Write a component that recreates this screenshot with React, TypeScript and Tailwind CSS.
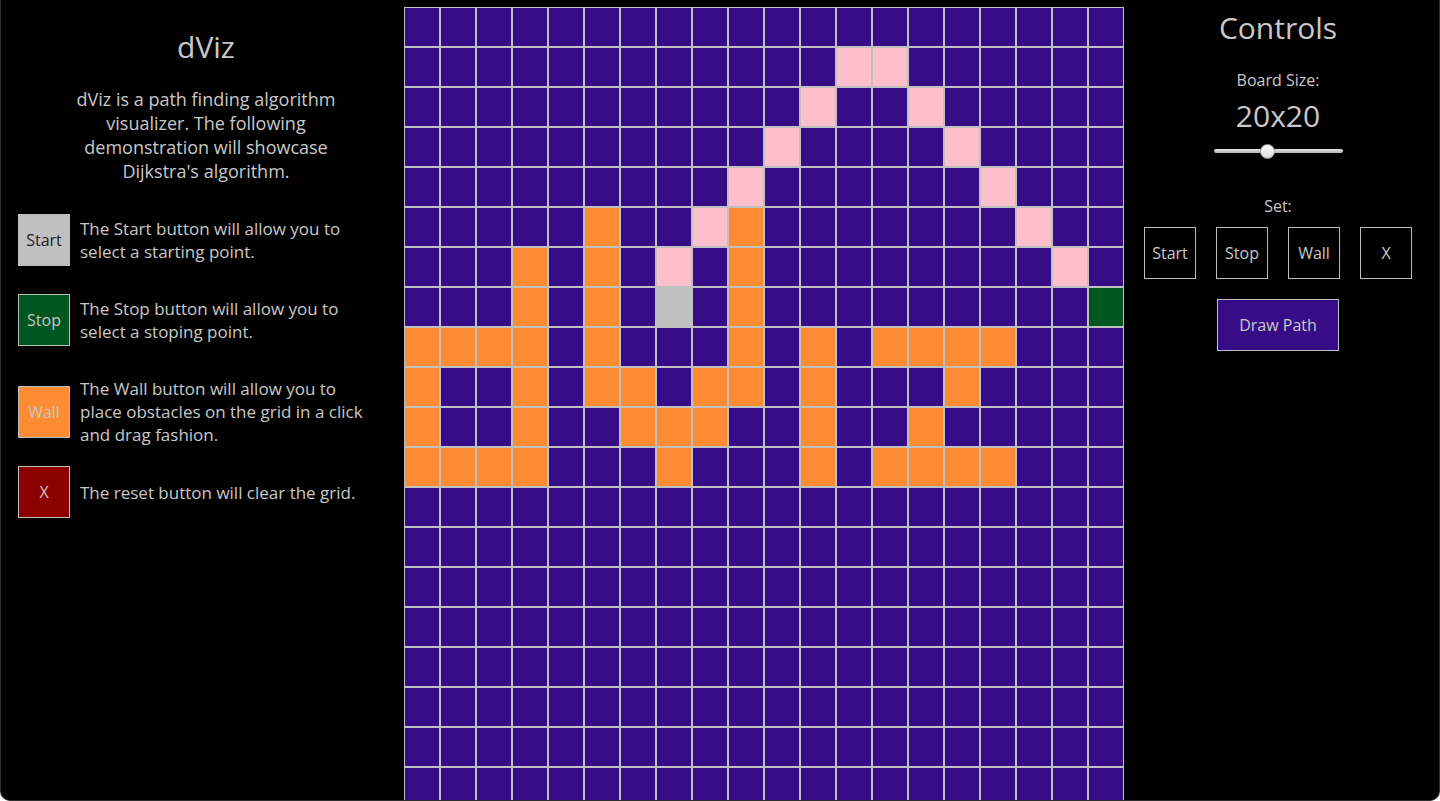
import React from "react";

const COLS = 20;
const ROWS = 20;

// cells drawn on the board, "row,col"
const walls = new Set([
  "5,5", "5,9",
  "6,3", "6,5", "6,9",
  "7,3", "7,5", "7,9",
  "8,0", "8,1", "8,2", "8,3", "8,5", "8,9", "8,11", "8,13", "8,14", "8,15", "8,16",
  "9,0", "9,3", "9,5", "9,6", "9,8", "9,9", "9,11", "9,15",
  "10,0", "10,3", "10,6", "10,7", "10,8", "10,11", "10,14",
  "11,0", "11,1", "11,2", "11,3", "11,7", "11,11", "11,13", "11,14", "11,15", "11,16",
]);

const path = new Set([
  "1,12", "1,13",
  "2,11", "2,14",
  "3,10", "3,15",
  "4,9", "4,16",
  "5,8", "5,17",
  "6,7", "6,18",
]);

const START = "7,7";
const STOP = "7,19";

function cellColor(key: string) {
  if (key === START) return "bg-[#c0c0c0]";
  if (key === STOP) return "bg-[#00561f]";
  if (walls.has(key)) return "bg-[#ff8c33]";
  if (path.has(key)) return "bg-[#ffc0cb]";
  return "bg-[#370d87]";
}

const legend = [
  {
    label: "Start",
    cls: "bg-[#c0c0c0] text-[#222]",
    text: "The Start button will allow you to select a starting point.",
    mt: "mt-[31px]",
  },
  {
    label: "Stop",
    cls: "bg-[#00561f] text-[#c8c8c8]",
    text: "The Stop button will allow you to select a stoping point.",
    mt: "mt-[28px]",
  },
  {
    label: "Wall",
    cls: "bg-[#ff8c33] text-[#c8c8c8]",
    text: "The Wall button will allow you to place obstacles on the grid in a click and drag fashion.",
    mt: "mt-[31px]",
  },
  {
    label: "X",
    cls: "bg-[#8b0000] text-[#c8c8c8]",
    text: "The reset button will clear the grid.",
    mt: "mt-[20px]",
  },
];

function Board() {
  const cells = [];
  for (let r = 0; r < ROWS; r++) {
    for (let c = 0; c < COLS; c++) {
      const key = `${r},${c}`;
      cells.push(
        <div key={key} className={`border border-[#c0c0c0] ${cellColor(key)}`} />
      );
    }
  }
  return (
    <div className="mt-[7px] grid w-[720px] shrink-0 grid-cols-[repeat(20,36px)] auto-rows-[40px]">
      {cells}
    </div>
  );
}

function Slider() {
  return (
    <div className="relative mt-[10px] h-[15px] w-[129px]">
      <div className="absolute left-0 right-0 top-[5px] h-[4px] rounded-full bg-gradient-to-b from-[#e2e2e2] to-[#b8b8b8]" />
      {/* thumb */}
      <div className="absolute left-[46px] top-0 h-[15px] w-[15px] rounded-full border border-[#9a9a9a] bg-gradient-to-b from-white to-[#dcdcdc]" />
    </div>
  );
}

export default function App() {
  return (
    <div className="flex h-[801px] w-full overflow-hidden rounded-b-[10px] border-x border-b border-[#2e2e2e] bg-black pl-[7px] pr-[7px] font-['Open_Sans','Noto_Sans',sans-serif] text-[#c8c8c8]">
      {/* 설명 패널 */}
      <aside className="flex w-[396px] shrink-0 flex-col">
        <h1 className="mt-[29px] text-center text-[30px] leading-[36px]">dViz</h1>
        <p className="mx-auto mt-[22px] w-[300px] text-center text-[18px] leading-[24px]">
          dViz is a path finding algorithm visualizer. The following demonstration will showcase Dijkstra's algorithm.
        </p>
        {legend.map((it) => (
          <div key={it.label} className={`flex items-center gap-[10px] pl-[10px] ${it.mt}`}>
            <div
              className={`flex h-[52px] w-[52px] shrink-0 items-center justify-center border border-[#bdbdbd] text-[16px] ${it.cls}`}
            >
              {it.label}
            </div>
            <p className="w-[296px] text-[17px] leading-[23px]">{it.text}</p>
          </div>
        ))}
      </aside>

      <Board />

      {/* 컨트롤 패널 */}
      <aside className="flex w-[308px] shrink-0 flex-col items-center">
        <h2 className="mt-[10px] text-[30px] leading-[36px]">Controls</h2>
        <p className="mt-[22px] text-[16px] leading-[24px]">Board Size:</p>
        <p className="mt-[6px] text-[30px] leading-[36px]">20x20</p>
        <Slider />
        <p className="mt-[35px] text-[16px] leading-[24px]">Set:</p>
        <div className="mt-[9px] flex gap-[20px]">
          {["Start", "Stop", "Wall", "X"].map((b) => (
            <button
              key={b}
              type="button"
              className="flex h-[52px] w-[52px] items-center justify-center border border-[#bdbdbd] bg-black text-[16px] text-[#c8c8c8]"
            >
              {b}
            </button>
          ))}
        </div>
        <button
          type="button"
          className="mt-[20px] h-[52px] w-[122px] border border-[#bdbdbd] bg-[#370d87] text-[16px] text-[#c8c8c8]"
        >
          Draw Path
        </button>
      </aside>
    </div>
  );
}
